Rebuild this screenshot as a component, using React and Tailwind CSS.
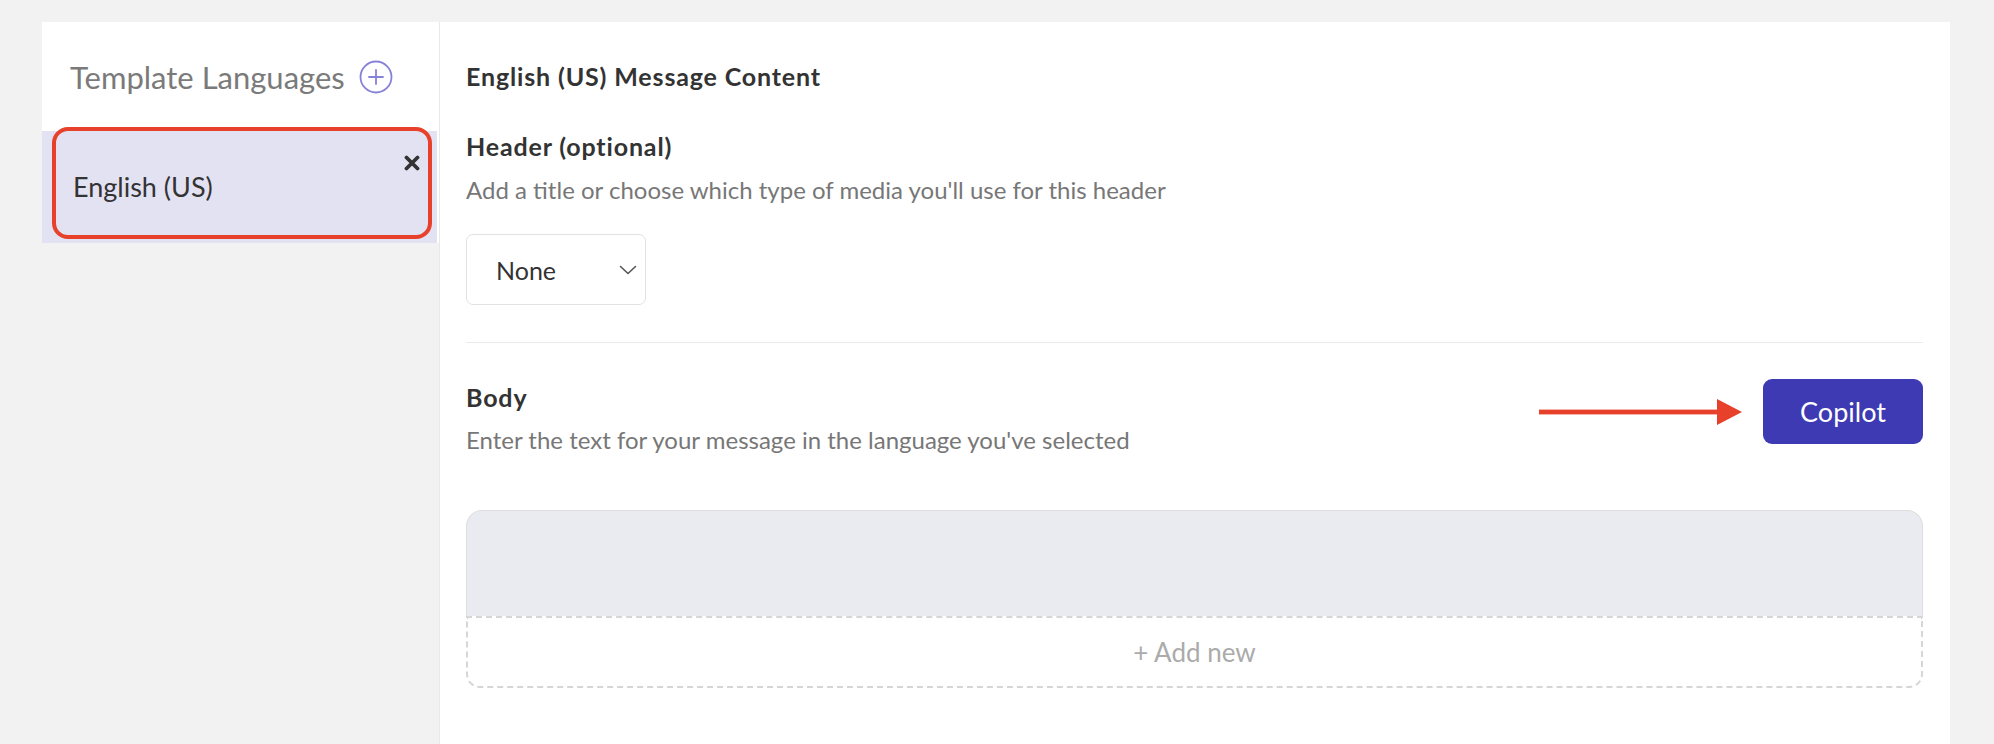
import React from 'react';

const font = { fontFamily: 'Lato, "Open Sans", sans-serif' };

const PlusCircle = () => (
  <svg width="34" height="34" viewBox="0 0 34 34" fill="none">
    <circle cx="17" cy="17" r="15.5" stroke="#8781d8" strokeWidth="1.8" />
    <path d="M17 10v14M10 17h14" stroke="#8781d8" strokeWidth="1.8" strokeLinecap="round" />
  </svg>
);

const CloseIcon = () => (
  <svg width="16" height="16" viewBox="0 0 16 16" fill="none">
    <path d="M2.5 2.5l11 11M13.5 2.5l-11 11" stroke="#333" strokeWidth="3.8" strokeLinecap="round" />
  </svg>
);

const Chevron = () => (
  <svg width="18" height="10" viewBox="0 0 18 10" fill="none">
    <path d="M1.5 1.5L9 8.5l7.5-7" stroke="#555" strokeWidth="1.6" strokeLinecap="round" strokeLinejoin="round" />
  </svg>
);

const Arrow = () => (
  <svg width="203" height="26" viewBox="0 0 203 26">
    <rect x="0" y="10.6" width="182" height="4.8" fill="#e8412b" />
    <path d="M178 0L203 13L178 26Z" fill="#e8412b" />
  </svg>
);

export default function App() {
  return (
    <div className="min-h-screen bg-[#f2f2f2] pt-[22px] pl-[42px] flex items-start" style={font}>
      {/* sidebar */}
      <div className="w-[397px] bg-white flex flex-col">
        <div className="h-[109px] pl-[28px] flex items-center gap-[14px]">
          <span className="text-[31px] leading-[40px] text-[#7a7a7a]">Template Languages</span>
          <PlusCircle />
        </div>
        <div className="relative h-[112px] w-[395px] bg-[#e3e2f3] flex items-center pl-[31px]">
          <span className="text-[27px] leading-[34px] text-[#333]">English (US)</span>
          <div className="absolute top-[24px] right-[17px]">
            <CloseIcon />
          </div>
          <div className="absolute left-[10px] -top-[4px] w-[380px] h-[112px] border-[4.5px] border-[#e8412b] rounded-[16px]"></div>
        </div>
      </div>

      {/* main */}
      <div className="w-[1511px] min-h-[722px] bg-white border-l border-[#e8e8e8] pl-[26px] pr-[27px] pt-[40px]">
        <h2 className="text-[25px] leading-[28px] font-bold tracking-[0.85px] text-[#333]">English (US) Message Content</h2>

        <h3 className="mt-[42px] text-[25px] leading-[28px] font-bold tracking-[0.85px] text-[#333]">Header (optional)</h3>
        <p className="mt-[16px] text-[24px] leading-[28px] text-[#777]">
          Add a title or choose which type of media you'll use for this header
        </p>
        <div className="mt-[30px] w-[180px] h-[71px] border border-[#e2e2e2] rounded-[7px] flex items-center justify-between pl-[29px] pr-[8px]">
          <span className="text-[25px] leading-[30px] text-[#333]">None</span>
          <Chevron />
        </div>

        <div className="mt-[37px] border-t border-[#ebebeb]"></div>

        <div className="mt-[36px] flex items-start justify-between">
          <div className="pt-[4px] flex flex-col gap-[15px]">
            <h3 className="text-[25px] leading-[28px] font-bold tracking-[0.85px] text-[#333]">Body</h3>
            <p className="text-[24px] leading-[28px] text-[#777]">Enter the text for your message in the language you've selected</p>
          </div>
          <div className="flex items-center gap-[21px]">
            <Arrow />
            <button className="w-[160px] h-[65px] rounded-[9px] bg-[#3e3ab3] text-white text-[27px] leading-[32px]">
              Copilot
            </button>
          </div>
        </div>

        <div className="mt-[56px]">
          <div className="h-[106px] bg-[#eaebf0] border border-b-0 border-[#dedede] rounded-t-[16px]"></div>
          <div className="h-[72px] border-2 border-dashed border-[#d6d6d6] rounded-b-[14px] flex items-center justify-center">
            <span className="text-[26px] leading-[30px] text-[#ababab]">+ Add new</span>
          </div>
        </div>
      </div>
    </div>
  );
}
